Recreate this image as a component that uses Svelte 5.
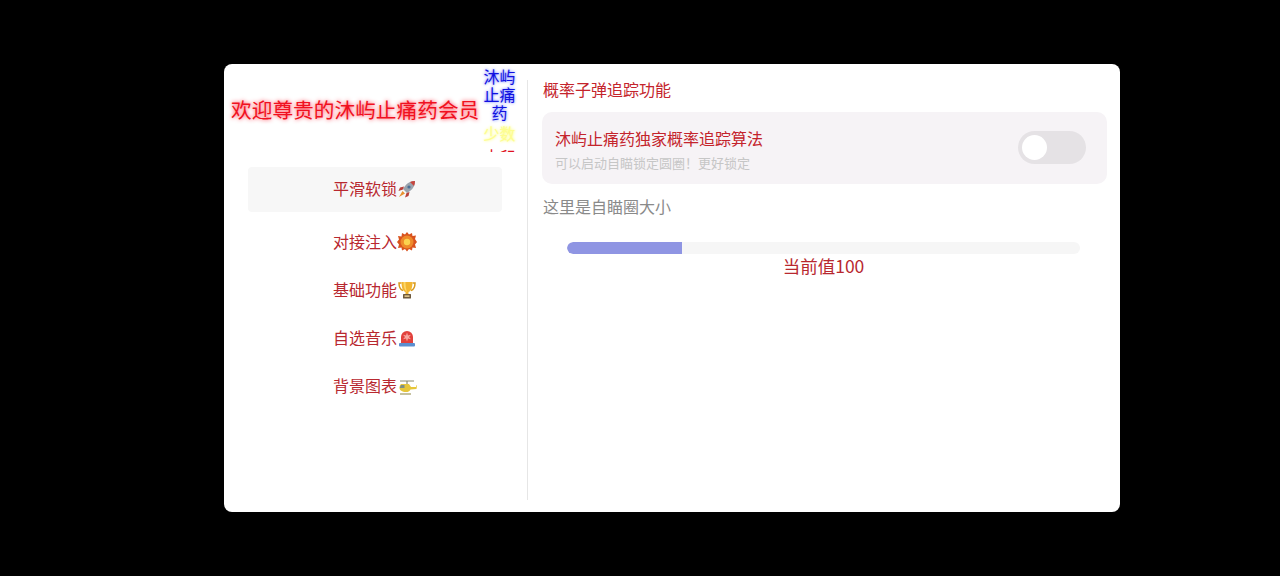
<script>
	const menu = [
		{ label: '平滑软锁', icon: 'rocket' },
		{ label: '对接注入', icon: 'boom' },
		{ label: '基础功能', icon: 'trophy' },
		{ label: '自选音乐', icon: 'siren' },
		{ label: '背景图表', icon: 'heli' }
	];
	let active = $state(0);
	let locked = $state(false);
	let size = $state(100);
</script>

<div class="page">
	<div class="card">
		<aside class="left">
			<div class="brand">
				<h1>欢迎尊贵的沐屿止痛药会员</h1>
				<div class="ticker">
					<p class="blue">沐屿止痛药</p>
					<p class="yellow">少数</p>
					<p class="red">水印</p>
				</div>
			</div>
			<nav>
				{#each menu as item, i}
					<button class="item" class:active={active === i} onclick={() => (active = i)}>
						{item.label}<svg viewBox="0 0 20 20" width="20" height="20" aria-hidden="true">
							{#if item.icon === 'rocket'}
								<path d="M18 2c-4 0-7.500 1.500-10 5l-2 3 4 4 3-2c3.500-2.500 5-6 5-10z" fill="#9aa3ad" />
								<path d="M18 2c-1.800 0-3.500.300-5 1l4 4c.700-1.500 1-3.200 1-5z" fill="#c8443c" />
								<circle cx="12" cy="8" r="1.600" fill="#4a6f95" />
								<path d="M7 7.500 3 8.500 1.500 12 6 10.500zM12.500 13 11.500 17 8 18.500 9.500 14z" fill="#b8403a" />
								<path d="M5.500 12 2 18l6-3.500z" fill="#e8912f" />
							{:else if item.icon === 'boom'}
								<path d="M10 0l2 2.500 3-1.500.5 3 3.500-.5-1 3.500L20 10l-2 2.500 1 3.500-3.500-.5-.5 3-3-1.500-2 2.500-2-2.500-3 1.500-.5-3L1 16l1-3.500L0 10l2-2.500L1 4l3.500.5L5 1l3 1.500z" fill="#d9531e" />
								<circle cx="10" cy="10" r="6.500" fill="#ee8a2a" />
								<circle cx="10" cy="10" r="3.200" fill="#fbd24e" />
							{:else if item.icon === 'trophy'}
								<path d="M4.500 3H2c0 4 1 6.500 4 7.500M15.500 3H18c0 4-1 6.500-4 7.500" fill="none" stroke="#d99a1c" stroke-width="1.500" />
								<path d="M4.500 2h11c0 5-1 9-4 10v2h-3v-2c-3-1-4-5-4-10z" fill="#f2b632" />
								<path d="M6.500 2h2c0 4 .500 7 1.500 10-2.500-1.500-3.500-5-3.500-10z" fill="#fbd76b" />
								<rect x="6" y="14" width="8" height="4.500" rx=".5" fill="#6f5a3c" />
								<rect x="7.500" y="15.300" width="5" height="1.700" fill="#d9c089" />
							{:else if item.icon === 'siren'}
								<path d="M4 15V9a6 6 0 0 1 12 0v6z" fill="#e2413c" />
								<path d="M10 4.500l1 3 3-.700-2 2.200 2 2.300-3-.800-1 3-1-3-3 .800 2-2.300-2-2.200 3 .700z" fill="#f7a7a0" />
								<rect x="2" y="15" width="16" height="3.500" rx="1" fill="#5b8fd0" />
							{:else}
								<path d="M3 5h14" stroke="#8a8a70" stroke-width="1" />
								<path d="M10 5v3" stroke="#8a8a70" stroke-width="1.200" />
								<path d="M4 8h8l2 3h5l.500-2 .500.500-.5 3.500-6 .5c-1 2-2.500 2.500-4.500 2.500C5 16 2.500 14 2.500 12 2.500 10 3 9 4 8z" fill="#e6c63a" />
								<path d="M4 9h3.500v3H2.800C3 11 3.300 10 4 9z" fill="#7d8f86" />
								<path d="M3 18h11" stroke="#a09a60" stroke-width="1.200" />
							{/if}
						</svg>
					</button>
				{/each}
			</nav>
		</aside>
		<div class="divider"></div>

		<main class="right">
			<h2>概率子弹追踪功能</h2>
			<section class="panel">
				<div class="panel-text">
					<h3>沐屿止痛药独家概率追踪算法</h3>
					<p>可以启动自瞄锁定圆圈！更好锁定</p>
				</div>
				<button class="switch" class:on={locked} aria-label="概率追踪" onclick={() => (locked = !locked)}>
					<span></span>
				</button>
			</section>
			<h4>这里是自瞄圈大小</h4>
			<div class="slider">
				<div class="track"><div class="fill" style="width: {size * 1.15}px"></div></div>
				<div class="value">当前值{size}</div>
			</div>
		</main>
	</div>
</div>

<style>
	:global(body) {
		background: #000;
		font-family: 'Noto Sans CJK SC', 'Noto Sans', sans-serif;
	}

	.page {
		height: 576px;
		display: flex;
		align-items: center;
		padding-left: 224px;
	}

	.card {
		width: 896px;
		height: 448px;
		background: #fff;
		border-radius: 8px;
		display: flex;
		overflow: hidden;
	}

	.left {
		width: 303px;
		flex: none;
	}

	.divider {
		width: 1px;
		flex: none;
		margin: 16px 0 12px;
		background: #e6e6e6;
	}

	.brand {
		display: flex;
		height: 88px;
		padding-left: 7px;
	}

	h1 {
		margin: 0;
		width: 250px;
		flex: none;
		font-size: 20.7px;
		font-weight: 400;
		line-height: 90px;
		white-space: nowrap;
		color: #f01020;
		text-shadow: 0 0 4px #ff3040;
	}

	.ticker {
		width: 37px;
		height: 88px;
		overflow: hidden;
		text-align: center;
		font-size: 16px;
		line-height: 18px;
		padding-top: 3px;
		box-sizing: border-box;
	}

	.ticker p {
		margin: 0 0 3px;
	}

	.blue {
		color: #1010e0;
		text-shadow: 0 0 3px #5060ff;
	}

	.ticker .yellow {
		margin-bottom: 5px;
		color: #fdfd90;
		text-shadow: 0 0 3px #ffff60;
	}

	.red {
		color: #e01020;
	}

	nav {
		margin: 15px 25px 0 24px;
	}

	.item {
		display: flex;
		align-items: center;
		justify-content: center;
		width: 100%;
		height: 48px;
		padding: 0 0 4px;
		border: 0;
		background: none;
		color: #b8282f;
		font: inherit;
		font-size: 16px;
	}

	.item svg {
		flex: none;
		margin-top: 2px;
	}

	.item.active {
		height: 45px;
		margin-bottom: 7px;
		background: #f7f7f7;
		border-radius: 4px;
	}

	.right {
		flex: 1;
		padding: 13px 13px 0 15px;
		min-width: 0;
	}

	h2,
	h4 {
		margin: 0;
		font-size: 16px;
		font-weight: 400;
		line-height: 24px;
	}

	h2 {
		color: #c4242c;
	}

	h4 {
		margin-top: 10px;
		color: #8a8a8a;
	}

	.panel {
		display: flex;
		align-items: center;
		justify-content: space-between;
		height: 72px;
		margin: 11px 0 0 -1px;
		padding: 0 21px 0 13px;
		box-sizing: border-box;
		background: #f6f3f6;
		border-radius: 10px;
	}

	.panel-text {
		padding-top: 2px;
	}

	h3 {
		margin: 0;
		font-size: 16px;
		font-weight: 400;
		line-height: 24px;
		color: #c4242c;
	}

	.panel p {
		margin: 4px 0 0;
		font-size: 13px;
		line-height: 18px;
		color: #c6c6c6;
	}

	.switch {
		width: 68px;
		height: 33px;
		margin-top: -1px;
		padding: 4px;
		border: 0;
		border-radius: 17px;
		background: #e5e2e5;
		display: flex;
		align-items: center;
	}

	.switch span {
		width: 25px;
		height: 25px;
		border-radius: 50%;
		background: #fff;
	}

	.switch.on {
		justify-content: flex-end;
	}

	.slider {
		margin: 24px 27px 0 24px;
	}

	.track {
		height: 12px;
		border-radius: 6px;
		background: #f6f6f6;
		overflow: hidden;
	}

	.fill {
		height: 100%;
		background: #8f95e3;
		border-radius: 6px 0 0 6px;
	}

	.value {
		margin-top: -1px;
		text-align: center;
		font-size: 17.5px;
		line-height: 25px;
		color: #b8282f;
	}
</style>
